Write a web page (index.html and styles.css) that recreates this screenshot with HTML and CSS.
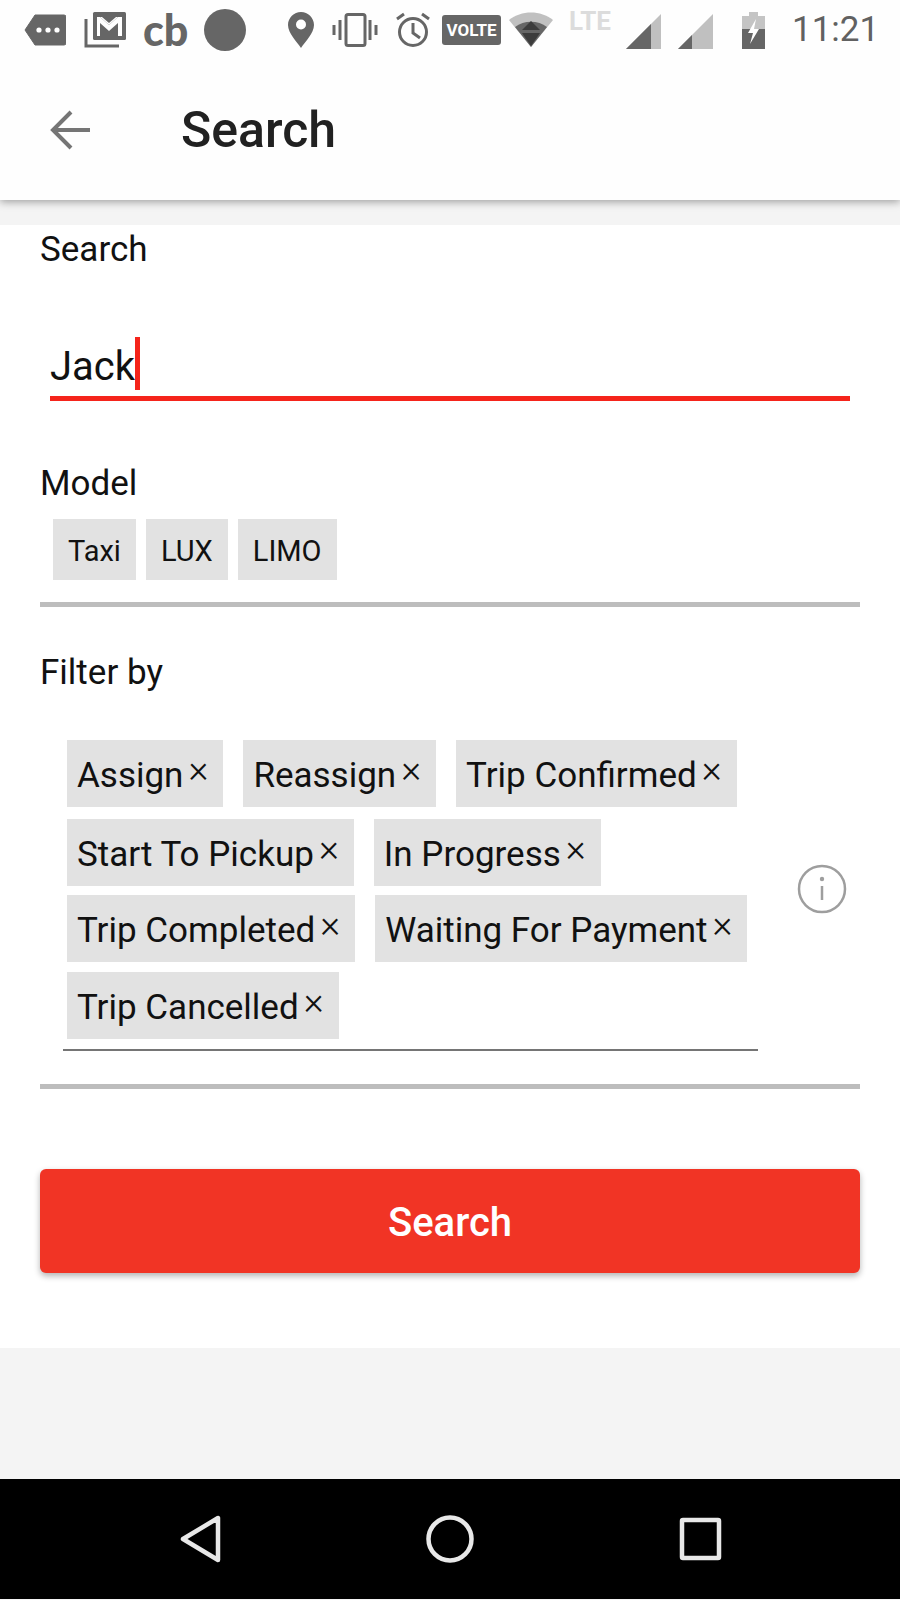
FILE: index.html
```html
<!DOCTYPE html>
<html lang="en">
<head>
  <meta charset="UTF-8">
  <meta name="viewport" content="width=device-width, initial-scale=1.0">
  <title>Search</title>
  <link rel="stylesheet" href="styles.css">
</head>
<body>

  <!-- Status bar + toolbar -->
  <header class="app-bar">
    <div class="status-bar">
      <svg class="ic-tag" width="42" height="32" viewBox="0 0 42 32"><path d="M11 1h29a2 2 0 0 1 2 2v26a2 2 0 0 1-2 2H11L1 16z" fill="#666" stroke="#666" stroke-linejoin="round"/><circle cx="15" cy="16" r="2.6" fill="#fff"/><circle cx="24" cy="16" r="2.6" fill="#fff"/><circle cx="33" cy="16" r="2.6" fill="#fff"/></svg>
      <svg class="ic-mail" width="42" height="36" viewBox="0 0 42 36"><path d="M2 7v27h33" fill="none" stroke="#666" stroke-width="3"/><rect x="9" y="0" width="33" height="28" rx="1.5" fill="#666"/><path d="M13 5h3l9 8 9-8h4v19h-4V11l-9 8-9-8v13h-3z" fill="#fff"/><path d="M16 5h18l-9 8z" fill="#fff"/><path d="M18 5h14l-7 6z" fill="#666"/></svg>
      <span class="cb-logo">cb</span>
      <svg class="ic-dot" width="42" height="42" viewBox="0 0 42 42"><circle cx="21" cy="21" r="21" fill="#666"/></svg>
      <svg class="ic-pin" width="26" height="36" viewBox="0 0 26 36"><path d="M13 0C6 0 0 5.700 0 13c0 8 9 17 13 23 4-6 13-15 13-23C26 5.700 20 0 13 0z" fill="#666"/><circle cx="13" cy="12.500" r="5" fill="#fff"/></svg>
      <svg class="ic-vibrate" width="46" height="34" viewBox="0 0 46 34"><rect x="14" y="1.500" width="19" height="31" rx="2" fill="none" stroke="#666" stroke-width="3"/><path d="M8 7v20M2 12v10M38 7v20M44 12v10" stroke="#666" stroke-width="3" fill="none"/></svg>
      <svg class="ic-alarm" width="36" height="36" viewBox="0 0 36 36"><circle cx="18" cy="20" r="13.500" fill="none" stroke="#666" stroke-width="3"/><path d="M18 11v10l7 5M2 7l7-5M34 7l-7-5" stroke="#666" stroke-width="3" fill="none"/></svg>
      <span class="volte">VOLTE</span>
      <svg class="ic-wifi" width="44" height="36" viewBox="0 0 44 36"><path d="M0 8C12-2 32-2 44 8L22 35z" fill="#c0c0c0"/><path d="M6 15C15 8 29 8 38 15L22 35z" fill="#666"/><path d="M22 5l9 9H13z" fill="#3c3c3c" transform="translate(0 4)"/><path d="M13 21h18l-9 13z" fill="#3c3c3c"/></svg>
      <span class="lte">LTE</span>
      <svg class="ic-signal" width="35" height="35" viewBox="0 0 35 35"><path d="M35 0v35H0z" fill="#c0c0c0"/><path d="M25 10v25H0z" fill="#666"/></svg>
      <svg class="ic-signal-2" width="35" height="35" viewBox="0 0 35 35"><path d="M35 0v35H0z" fill="#c0c0c0"/><path d="M14 21v14H0z" fill="#666"/></svg>
      <svg class="ic-battery" width="23" height="37" viewBox="0 0 23 37"><path d="M0 4h7V0h9v4h7v33H0z" fill="#c4c4c4"/><path d="M0 17h23v20H0z" fill="#666"/><path d="M14 7L6 21h5l-3 11 9-15h-5z" fill="#fff"/></svg>
      <span class="clock">11:21</span>
    </div>
    <div class="toolbar">
      <svg class="back-arrow" width="42" height="42" viewBox="0 0 42 42"><path d="M41 21H6M22 3L4 21l18 18" fill="none" stroke="#757575" stroke-width="4"/></svg>
      <h1 class="page-title">Search</h1>
    </div>
  </header>

  <main class="card">
    <div class="field-label search-label">Search</div>
    <div class="text-input">
      <span class="input-value">Jack</span><span class="caret"></span>
    </div>

    <div class="field-label model-label">Model</div>
    <div class="model-chips">
      <span class="model-chip">Taxi</span>
      <span class="model-chip">LUX</span>
      <span class="model-chip">LIMO</span>
    </div>
    <hr class="divider">

    <div class="field-label filter-label">Filter by</div>
    <div class="filter-row">
      <div class="chip-field">
        <div class="chip-line line-1">
          <span class="chip">Assign<span class="chip-x">×</span></span>
          <span class="chip">Reassign<span class="chip-x">×</span></span>
          <span class="chip">Trip Confirmed<span class="chip-x">×</span></span>
        </div>
        <div class="chip-line line-2">
          <span class="chip">Start To Pickup<span class="chip-x">×</span></span>
          <span class="chip">In Progress<span class="chip-x">×</span></span>
        </div>
        <div class="chip-line line-3">
          <span class="chip">Trip Completed<span class="chip-x">×</span></span>
          <span class="chip">Waiting For Payment<span class="chip-x">×</span></span>
        </div>
        <div class="chip-line line-4">
          <span class="chip">Trip Cancelled<span class="chip-x">×</span></span>
        </div>
      </div>
      <svg class="info-icon" width="50" height="50" viewBox="0 0 50 50"><circle cx="25" cy="25" r="23" fill="none" stroke="#9e9e9e" stroke-width="2.500"/><circle cx="25" cy="15" r="2.200" fill="#9e9e9e"/><path d="M25 22v14" stroke="#9e9e9e" stroke-width="2.500"/></svg>
    </div>
    <hr class="divider divider-low">

    <button class="search-btn">Search</button>
  </main>

  <!-- Android nav bar -->
  <nav class="nav-bar">
    <svg width="60" height="60" viewBox="0 0 60 60"><path d="M48 9v42L13 30z" fill="none" stroke="#e8e8e8" stroke-width="4.500" stroke-linejoin="round"/></svg>
    <svg width="60" height="60" viewBox="0 0 60 60"><circle cx="30" cy="30" r="21.500" fill="none" stroke="#e8e8e8" stroke-width="4.500"/></svg>
    <svg width="60" height="60" viewBox="0 0 60 60"><rect x="12" y="11" width="37" height="38" rx="1" fill="none" stroke="#e8e8e8" stroke-width="4.500"/></svg>
  </nav>

</body>
</html>
```

FILE: styles.css
```css
* { margin: 0; padding: 0; box-sizing: border-box; }
body {
  font-family: Roboto, "Liberation Sans", sans-serif;
  background-color: #f4f4f4;
  width: 900px;
  height: 1600px;
  color: #111;
  overflow: hidden;
}

/* top */
.app-bar {
  height: 200px;
  background: #fefefe;
  box-shadow: 0 2px 8px rgba(0, 0, 0, 0.35);
  position: relative;
}
.status-bar {
  height: 60px;
  display: flex;
  align-items: center;
  padding-left: 24px;
}
.ic-mail { margin-left: 18px; }
.cb-logo {
  margin-left: 17px;
  width: 44px;
  font: 900 43px/42px Lato, Roboto, sans-serif;
  color: #666;
}
.ic-dot { margin-left: 17px; }
.ic-pin { margin-left: 42px; }
.ic-vibrate { margin-left: 18px; }
.ic-alarm { margin-left: 17px; }
.volte {
  margin-left: 11px;
  width: 59px;
  height: 30px;
  background: #666;
  color: #fff;
  border-radius: 3px;
  font-size: 17px;
  font-weight: 700;
  line-height: 30px;
  text-align: center;
}
.ic-wifi { margin-left: 8px; }
.lte {
  margin: -18px 0 0 16px;
  width: 44px;
  color: #dcdcdc;
  font-size: 26px;
  font-weight: 700;
  line-height: 26px;
}
.ic-signal { margin: 3px 0 0 13px; }
.ic-signal-2 { margin: 3px 0 0 17px; }
.ic-battery { margin-left: 29px; }
.clock {
  margin-left: 27px;
  font-size: 35px;
  color: #616161;
  line-height: 42px;
}
.toolbar {
  height: 140px;
  display: flex;
  align-items: center;
  padding: 0 0 0 49px;
}
.page-title {
  margin-left: 90px;
  font-size: 50px;
  font-weight: 500;
  color: #212121;
}

/* form card */
.card {
  margin-top: 25px;
  height: 1123px;
  background: #fff;
  padding: 5px 40px 0;
}
.field-label {
  font-size: 35px;
  line-height: 40px;
  color: #111;
}
.text-input {
  margin: 63px 0 0 10px;
  width: 800px;
  height: 68px;
  border-bottom: 5px solid #f5241b;
  display: flex;
  align-items: flex-start;
}
.input-value {
  font-size: 40px;
  line-height: 53px;
  margin-top: 7px;
}
.caret {
  width: 5px;
  height: 53px;
  margin-top: 4px;
  background: #f5241b;
}
.model-label { margin-top: 63px; }
.model-chips {
  display: flex;
  gap: 10px;
  margin: 15px 0 0 13px;
}
.model-chip {
  background: #e2e2e2;
  height: 61px;
  padding: 0 15px;
  font-size: 29px;
  line-height: 65px;
}
.divider {
  border: 0;
  height: 5px;
  background: #bdbdbd;
  margin-top: 22px;
}
.filter-label { margin-top: 46px; }
.filter-row {
  display: flex;
  align-items: center;
  margin-top: 47px;
}
.chip-field {
  width: 695px;
  margin-left: 23px;
  padding: 0 0 10px 4px;
  border-bottom: 2px solid #757575;
}
.chip-line { display: flex; gap: 20px; }
.line-2 { margin-top: 12px; }
.line-3 { margin-top: 9px; }
.line-4 { margin-top: 10px; }
.chip {
  display: flex;
  height: 67px;
  background: #e2e2e2;
  padding: 0 15px 0 10px;
  font-size: 35px;
  line-height: 71px;
}
.chip-x {
  margin: -6px 0 0 5px;
  font-size: 38px;
  font-weight: 300;
}
.info-icon { margin: -14px 0 0 39px; }
.divider-low { margin-top: 33px; }
.search-btn {
  display: block;
  width: 100%;
  height: 104px;
  margin-top: 80px;
  padding-top: 3px;
  border: none;
  border-radius: 6px;
  background: #f13425;
  color: #fff;
  font-family: inherit;
  font-size: 40px;
  font-weight: 500;
  box-shadow: 0 3px 6px rgba(0, 0, 0, 0.3);
}

/* bottom */
.nav-bar {
  margin-top: 131px;
  height: 120px;
  background: #000;
  display: flex;
  justify-content: center;
  align-items: center;
  gap: 190px;
}
```
